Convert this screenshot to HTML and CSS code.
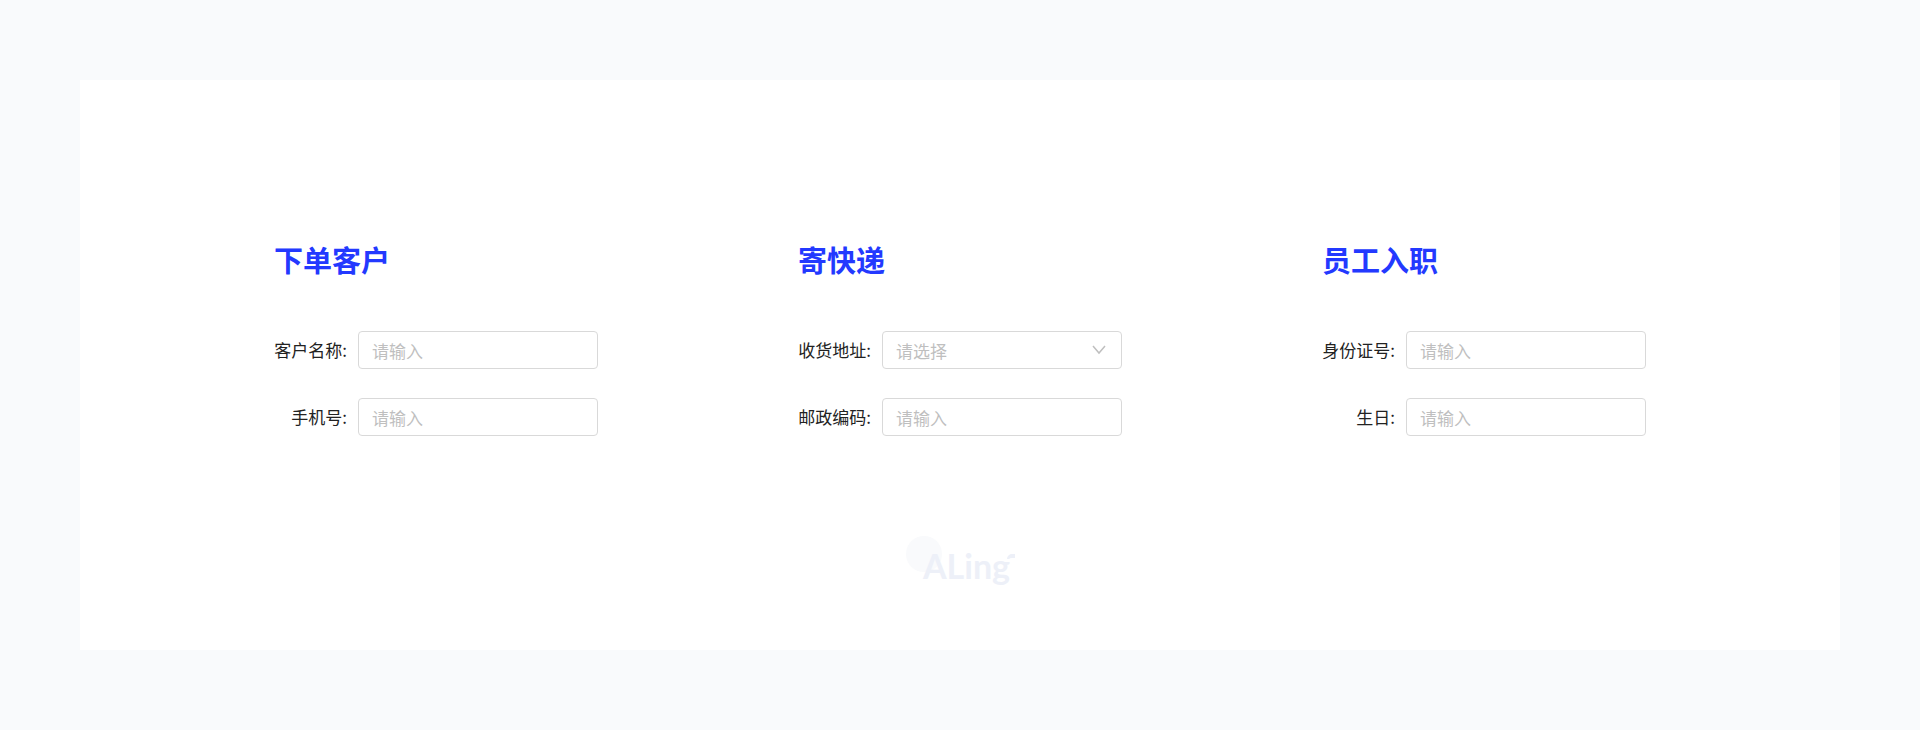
FILE: index.html
```html
<!DOCTYPE html>
<html lang="zh-CN">
<head>
    <meta charset="UTF-8">
    <meta name="viewport" content="width=device-width, initial-scale=1.0">
    <title>ALing</title>
    <link rel="stylesheet" href="styles.css">
</head>
<body>
    <main class="card">
        <form class="groups">
            <section class="group">
                <h2>下单客户</h2>
                <div class="form-item">
                    <label for="customer">客户名称:</label>
                    <input type="text" id="customer" name="customer" placeholder="请输入">
                </div>
                <div class="form-item">
                    <label for="phone">手机号:</label>
                    <input type="text" id="phone" name="phone" placeholder="请输入">
                </div>
            </section>

            <section class="group">
                <h2>寄快递</h2>
                <div class="form-item">
                    <label for="address">收货地址:</label>
                    <div class="select-box">
                        <select id="address" name="address" required>
                            <option value="" selected>请选择</option>
                        </select>
                        <svg class="arrow" viewBox="0 0 14 10" aria-hidden="true">
                            <path d="M1 1l6 7 6-7"/>
                        </svg>
                    </div>
                </div>
                <div class="form-item">
                    <label for="postcode">邮政编码:</label>
                    <input type="text" id="postcode" name="postcode" placeholder="请输入">
                </div>
            </section>

            <section class="group">
                <h2>员工入职</h2>
                <div class="form-item">
                    <label for="id-number">身份证号:</label>
                    <input type="text" id="id-number" name="id-number" placeholder="请输入">
                </div>
                <div class="form-item">
                    <label for="birthday">生日:</label>
                    <input type="text" id="birthday" name="birthday" placeholder="请输入">
                </div>
            </section>
        </form>

        <svg class="logo" viewBox="0 0 108 54" role="img" aria-label="ALing">
            <circle class="logo-dot" cx="18" cy="18" r="18"/>
            <text class="logo-text" x="17" y="43">ALing</text>
            <path class="logo-flag" d="M101 23a5 5 0 0 1 5-5h3v4h-3q-2 0-3 1z"/>
        </svg>
    </main>
</body>
</html>
```

FILE: styles.css
```css
* {
    box-sizing: border-box;
}

body {
    font-family: "Noto Sans CJK SC", sans-serif;
    font-size: 17px;
    line-height: 24px;
    color: #222;
    background-color: #f9fafc;
    margin: 0;
    padding: 80px;
}

.card {
    background-color: #fff;
    padding: 159px 40px 60px;
}

.groups {
    display: flex;
    flex-wrap: wrap;
    justify-content: center;
    gap: 60px 200px;
}

.group {
    width: 324px;
}

h2 {
    font-size: 29px;
    font-weight: 700;
    line-height: 40px;
    color: #2339ff;
    margin: 0 0 52px;
}

.form-item {
    display: flex;
    align-items: center;
    justify-content: space-between;
    margin-bottom: 29px;
}

.form-item:last-child {
    margin-bottom: 0;
}

label {
    width: 73px;
    text-align: right;
    white-space: nowrap;
}

input,
select {
    width: 240px;
    height: 38px;
    padding: 0 13px;
    border: 1px solid #d9d9d9;
    border-radius: 4px;
    background-color: #fff;
    color: #222;
    font-family: inherit;
    font-size: 17px;
    outline: none;
}

input:focus,
select:focus {
    border-color: #2339ff;
}

input::placeholder {
    color: #bfbfbf;
}

.select-box {
    position: relative;
}

select {
    display: block;
    appearance: none;
}

select:invalid {
    color: #bfbfbf;
}

.arrow {
    position: absolute;
    top: 14px;
    right: 16px;
    width: 14px;
    height: 10px;
    fill: none;
    stroke: #bfbfbf;
    stroke-width: 1.5;
    pointer-events: none;
}

.logo {
    display: block;
    width: 108px;
    height: 54px;
    margin: 100px auto 0;
    overflow: visible;
}

.logo-dot {
    fill: #f9fafc;
}

.logo-text {
    font-family: Lato, sans-serif;
    font-size: 34px;
    font-weight: 700;
    fill: #edf0f8;
}

.logo-flag {
    fill: #edf0f8;
}
```
